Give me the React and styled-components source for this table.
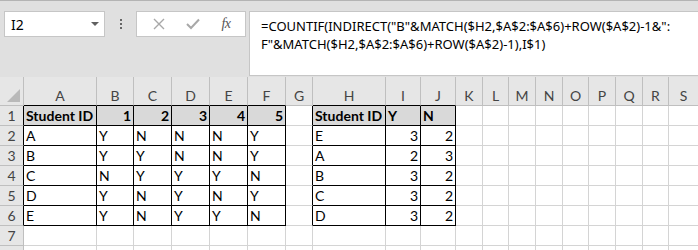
import React from "react";
import styled, { createGlobalStyle } from "styled-components";

const GlobalStyle = createGlobalStyle`
  html, body {
    margin: 0;
    padding: 0;
    background: #ffffff;
    overflow: hidden;
  }
`;

// sheet layout
const colWidths = [24, 73, 37, 38, 38, 38, 38, 27, 73, 35, 35, 27, 26, 27, 27, 26, 27, 27, 26, 30];
const colNames = ["", "A", "B", "C", "D", "E", "F", "G", "H", "I", "J", "K", "L", "M", "N", "O", "P", "Q", "R", "S"];
const rowCount = 8;
const shownRows = 7;

const tables = [
  { c0: 1, c1: 6, r0: 1, r1: 6 },
  { c0: 8, c1: 10, r0: 1, r1: 6 },
];

const data = {
  1: { 1: "Student ID", 2: 1, 3: 2, 4: 3, 5: 4, 6: 5, 8: "Student ID", 9: "Y", 10: "N" },
  2: { 1: "A", 2: "Y", 3: "N", 4: "N", 5: "N", 6: "Y", 8: "E", 9: 3, 10: 2 },
  3: { 1: "B", 2: "Y", 3: "Y", 4: "N", 5: "N", 6: "Y", 8: "A", 9: 2, 10: 3 },
  4: { 1: "C", 2: "N", 3: "Y", 4: "Y", 5: "Y", 6: "N", 8: "B", 9: 3, 10: 2 },
  5: { 1: "D", 2: "Y", 3: "N", 4: "Y", 5: "N", 6: "Y", 8: "C", 9: 3, 10: 2 },
  6: { 1: "E", 2: "Y", 3: "N", 4: "Y", 5: "Y", 6: "N", 8: "D", 9: 3, 10: 2 },
};

const inTable = (r, c) =>
  tables.some((t) => r >= t.r0 && r <= t.r1 && c >= t.c0 && c <= t.c1);

const Page = styled.div`
  width: 698px;
  height: 250px;
  overflow: hidden;
  background: #ffffff;
  font-family: "Lato", "Liberation Sans", sans-serif;
`;

const Bar = styled.div`
  height: 77px;
  box-sizing: border-box;
  background: #e0e0e0;
  border-top: 1px solid #b4b4b4;
  display: flex;
  align-items: flex-start;
  padding: 10px 0 0 4px;
`;

const NameBox = styled.div`
  width: 101px;
  height: 26px;
  box-sizing: border-box;
  background: #fff;
  border: 1px solid #c6c6c6;
  display: flex;
  align-items: center;
  justify-content: space-between;
  padding: 0 5px 0 6px;
  font-family: "Noto Sans", "Open Sans", sans-serif;
  font-size: 14px;
  color: #000;
`;

const Caret = styled.span`
  width: 0;
  height: 0;
  border-left: 4px solid transparent;
  border-right: 4px solid transparent;
  border-top: 4px solid #606060;
`;

const Dots = styled.div`
  width: 31px;
  height: 26px;
  display: flex;
  flex-direction: column;
  align-items: center;
  justify-content: center;
  gap: 2px;

  span {
    width: 2px;
    height: 2px;
    background: #666;
  }
`;

const FxBox = styled.div`
  width: 110px;
  height: 26px;
  box-sizing: border-box;
  background: #fff;
  border: 1px solid #c6c6c6;
  display: flex;
  align-items: center;
  justify-content: space-around;
  padding: 0 4px 0 6px;
`;

const FxLabel = styled.span`
  font-family: "Liberation Serif", "DejaVu Serif", serif;
  font-style: italic;
  font-size: 14px;
  color: #555;
  letter-spacing: -0.5px;
`;

const FormulaInput = styled.div`
  flex: 1;
  height: 65px;
  margin-left: 3px;
  box-sizing: border-box;
  background: #fff;
  border: 1px solid #c6c6c6;
  border-right: none;
  padding: 5px 0 0 11px;
  font-family: "Noto Sans", "Open Sans", sans-serif;
  font-size: 13px;
  line-height: 18px;
  color: #000;
  white-space: pre;
`;

const Grid = styled.div`
  display: grid;
  grid-template-columns: ${colWidths.map((w) => w + "px").join(" ")};
  grid-template-rows: 29px repeat(${rowCount}, 20px);
  background: #e0e0e0;
`;

const HeadCell = styled.div`
  box-sizing: border-box;
  background: #e6e6e6;
  border-right: 1px solid ${(p) => (p.$darkRight ? "#000" : "#bfbfbf")};
  border-bottom: 1px solid ${(p) => (p.$darkBottom ? "#000" : "#bfbfbf")};
  color: #444;
  font-size: 14px;
  display: flex;
  align-items: ${(p) => (p.$col ? "flex-end" : "center")};
  justify-content: center;
  padding-bottom: ${(p) => (p.$col ? "1px" : "0")};
  position: relative;
`;

const CornerMark = styled.span`
  position: absolute;
  right: 3px;
  bottom: 3px;
  width: 0;
  height: 0;
  border-left: 13px solid transparent;
  border-bottom: 13px solid #b9b9b9;
`;

const Cell = styled.div`
  box-sizing: border-box;
  background: ${(p) => (p.$fill ? "#d9d9d9" : "#ffffff")};
  border-right: 1px solid ${(p) => (p.$darkRight ? "#000" : "#d4d4d4")};
  border-bottom: 1px solid ${(p) => (p.$darkBottom ? "#000" : "#d4d4d4")};
  font-size: 14px;
  font-weight: ${(p) => (p.$bold ? 700 : 400)};
  color: #000;
  display: flex;
  align-items: center;
  justify-content: ${(p) => (p.$right ? "flex-end" : "flex-start")};
  padding: 0 2px 0 2px;
  white-space: nowrap;
  overflow: hidden;
`;

function CrossIcon() {
  return (
    <svg width="12" height="12" viewBox="0 0 12 12">
      <path d="M1 1 L11 11 M11 1 L1 11" stroke="#a8a8a8" strokeWidth="1.4" fill="none" />
    </svg>
  );
}

function CheckIcon() {
  return (
    <svg width="14" height="12" viewBox="0 0 14 12">
      <path d="M1 6 L5 10 L13 1.5" stroke="#a8a8a8" strokeWidth="2" fill="none" />
    </svg>
  );
}

export default function App() {
  const cells = [];

  // column header row
  colNames.forEach((name, c) => {
    const belowDark = c > 0 && inTable(1, c);
    cells.push(
      <HeadCell key={"h" + c} $col $darkBottom={belowDark}>
        {c === 0 ? <CornerMark /> : name}
      </HeadCell>
    );
  });

  for (let r = 1; r <= rowCount; r++) {
    // rows past the visible area keep their header box but no label
    cells.push(
      <HeadCell key={"r" + r} $darkRight={inTable(r, 1)}>
        {r <= shownRows ? r : ""}
      </HeadCell>
    );
    for (let c = 1; c < colNames.length; c++) {
      const value = data[r] && data[r][c] !== undefined ? data[r][c] : "";
      const here = inTable(r, c);
      cells.push(
        <Cell
          key={r + "-" + c}
          $darkRight={here || inTable(r, c + 1)}
          $darkBottom={here || inTable(r + 1, c)}
          $fill={here && r === 1}
          $bold={here && r === 1}
          $right={typeof value === "number"}
        >
          {value}
        </Cell>
      );
    }
  }

  return (
    <Page>
      <GlobalStyle />
      <Bar>
        <NameBox>
          I2
          <Caret />
        </NameBox>
        <Dots>
          <span />
          <span />
          <span />
        </Dots>
        <FxBox>
          <CrossIcon />
          <CheckIcon />
          <FxLabel>fx</FxLabel>
        </FxBox>
        <FormulaInput>
          {'=COUNTIF(INDIRECT("B"&MATCH($H2,$A$2:$A$6)+ROW($A$2)-1&":\nF"&MATCH($H2,$A$2:$A$6)+ROW($A$2)-1),I$1)'}
        </FormulaInput>
      </Bar>
      <Grid>{cells}</Grid>
    </Page>
  );
}
